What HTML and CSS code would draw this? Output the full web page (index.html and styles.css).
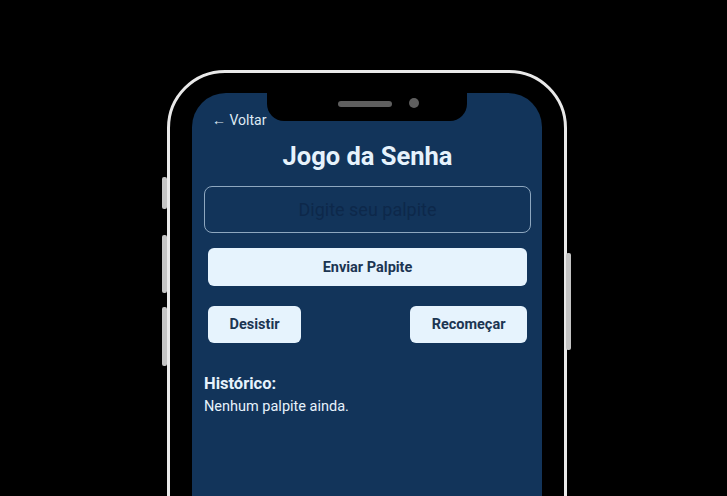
FILE: index.html
```html
<!DOCTYPE html>
<html lang="pt-BR">
<head>
<meta charset="utf-8">
<title>Jogo da Senha</title>
<link rel="stylesheet" href="styles.css">
</head>
<body>
<div class="phone">
  <span class="side-btn side-left b1"></span>
  <span class="side-btn side-left b2"></span>
  <span class="side-btn side-left b3"></span>
  <span class="side-btn side-right b4"></span>
  <div class="screen">
    <div class="notch">
      <span class="speaker"></span>
      <span class="camera"></span>
    </div>
    <a class="back">← Voltar</a>
    <h1 class="title">Jogo da Senha</h1>
    <input class="guess" type="text" placeholder="Digite seu palpite">
    <button class="btn btn-wide">Enviar Palpite</button>
    <div class="actions">
      <button class="btn">Desistir</button>
      <button class="btn">Recomeçar</button>
    </div>
    <h2 class="hist-title">Histórico:</h2>
    <p class="hist-empty">Nenhum palpite ainda.</p>
  </div>
</div>
</body>
</html>
```
FILE: styles.css
```css
* { box-sizing: border-box; }
html, body { margin: 0; padding: 0; }
body {
  background: #000;
  width: 727px;
  height: 496px;
  overflow: hidden;
  font-family: Roboto, "Liberation Sans", sans-serif;
}
.phone {
  position: relative;
  margin: 70px 0 0 167px;
  width: 400px;
  height: 720px;
  border: 3px solid #e9e9e9;
  border-radius: 58px;
  background: #000;
  padding: 20px 22px;
}
.side-btn {
  position: absolute;
  width: 5px;
  background: #c4c4c4;
  border-radius: 2px;
}
.side-left { left: -8px; }
.side-right { right: -7px; }
.b1 { top: 104px; height: 32px; }
.b2 { top: 162px; height: 58px; }
.b3 { top: 234px; height: 59px; }
.b4 { top: 180px; height: 97px; }
.screen {
  position: relative;
  height: 100%;
  background: #12345a;
  border-radius: 34px;
  padding: 17px 11px 0 12px;
  display: flex;
  flex-direction: column;
  align-items: stretch;
}
.notch {
  position: absolute;
  top: 0;
  left: 75px;
  width: 200px;
  height: 28px;
  background: #000;
  border-radius: 0 0 17px 17px;
}
.speaker {
  position: absolute;
  left: 71px;
  top: 8px;
  width: 54px;
  height: 6px;
  border-radius: 3px;
  background: #5f5f5f;
}
.camera {
  position: absolute;
  left: 142px;
  top: 5px;
  width: 10px;
  height: 10px;
  border-radius: 50%;
  background: #5f5f5f;
}
.back {
  align-self: flex-start;
  margin-left: 8px;
  font-size: 14px;
  line-height: 20px;
  color: #dfe9f3;
}
.title {
  margin: 10px 0 0;
  text-align: center;
  font-size: 25.5px;
  line-height: 32px;
  font-weight: 700;
  color: #e6f2fc;
}
.guess {
  margin-top: 14px;
  height: 47px;
  width: 100%;
  background: transparent;
  border: 1px solid #8ea7bf;
  border-radius: 8px;
  text-align: center;
  font-family: inherit;
  font-size: 18px;
  color: #e6f2fc;
  outline: none;
}
.guess::placeholder { color: #0d284a; }
.btn {
  height: 37px;
  padding: 0 21.5px;
  border: none;
  border-radius: 6px;
  background: #e6f3fd;
  color: #1c3552;
  font-family: inherit;
  font-size: 14.5px;
  font-weight: 700;
}
.btn-wide {
  margin: 15px 4px 0;
  height: 38px;
}
.actions {
  margin: 20px 4px 0;
  display: flex;
  justify-content: space-between;
}
.hist-title {
  margin: 30px 0 0;
  font-size: 16.5px;
  line-height: 22px;
  font-weight: 700;
  color: #e6f2fc;
}
.hist-empty {
  margin: 2px 0 0;
  font-size: 14.5px;
  line-height: 20px;
  color: #e6f2fc;
}
```
